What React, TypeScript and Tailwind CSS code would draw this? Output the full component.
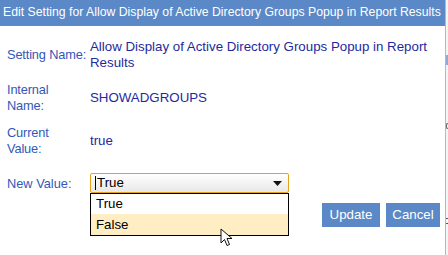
import React from 'react';

const rows = [
  { label: ['Setting Name:'], value: 'Allow Display of Active Directory Groups Popup in Report Results' },
  { label: ['Internal', 'Name:'], value: 'SHOWADGROUPS' },
  { label: ['Current', 'Value:'], value: 'true' },
];

export default function App() {
  return (
    <div className="relative w-[448px] h-[255px] overflow-hidden bg-white" style={{ fontFamily: 'Tahoma, "Liberation Sans", Arial, sans-serif' }}>
      <div className="flex h-full">
        {/* Dialog */}
        <div className="w-[445px] flex flex-col">
          <div className="h-[26px] bg-[#5b88c6] text-white text-[12.25px] pl-[3px] pb-px flex items-center whitespace-nowrap">
            Edit Setting for Allow Display of Active Directory Groups Popup in Report Results
          </div>

          <div className="pt-[13px] pl-[7px] flex flex-col gap-[11px] text-[13.3px] leading-[16px]">
            {rows.map((row) => (
              <div key={row.value} className="grid grid-cols-[83px_1fr] items-center">
                <div className="text-[#3357b8] text-[12.8px] tracking-[-0.15px] whitespace-nowrap">
                  {row.label.map((l) => (
                    <div key={l}>{l}</div>
                  ))}
                </div>
                <div className="text-[#1e2a9c] pr-[8px]">{row.value}</div>
              </div>
            ))}
          </div>

          <div className="mt-[16px] pl-[7px] flex items-start text-[13.3px]">
            <div className="w-[83px] h-[21px] flex items-center text-[#3357b8] text-[12.8px]">New Value:</div>
            <div className="relative w-[199px]">
              <div className="h-[20px] border border-[#e3a21a] rounded-[2px] bg-gradient-to-b from-white to-[#e8e8e8] flex items-center pl-[4px] pr-[6px] text-black">
                <span className="w-px h-[14px] bg-black mr-px" />
                <span className="flex-1">True</span>
                <svg width="9" height="5" viewBox="0 0 9 5">
                  <polygon points="0,0 9,0 4.5,5" fill="#111" />
                </svg>
              </div>
              <div className="border border-black bg-white text-black">
                <div className="h-[20px] pl-[5px] flex items-center">True</div>
                <div className="h-[21px] pl-[5px] flex items-center bg-[#ffedc4]">False</div>
              </div>
              {/* mouse pointer */}
              <svg className="absolute left-[130px] top-[55px]" width="14" height="20" viewBox="0 0 14 20">
                <path d="M1 1 L1 15 L4.5 11.5 L7 17.5 L9.5 16.5 L7 10.5 L12 10.5 Z" fill="white" stroke="#111" strokeWidth="1" strokeLinejoin="round" />
              </svg>
            </div>
            <div className="ml-auto mt-[30px] mr-[5px] flex gap-[6px]">
              <button className="h-[24px] w-[58px] bg-[#5b88c6] text-white text-[13.3px]">Update</button>
              <button className="h-[24px] w-[54px] bg-[#5b88c6] text-white text-[13.3px]">Cancel</button>
            </div>
          </div>
        </div>

        {/* Page behind, at the right edge */}
        <div className="flex-1 border-l border-[#b8b8b8] bg-[#f4f4f4] relative">
          <div className="absolute top-[55px] left-0 w-[2px] h-[10px] bg-[#8faad8]" />
          <div className="absolute top-[123px] left-0 w-[2px] h-[6px] rounded-l-full border-l border-y border-[#666]" />
          <div className="absolute top-[218px] left-0 w-[2px] h-[6px] border-y border-[#555]" />
        </div>
      </div>
    </div>
  );
}
